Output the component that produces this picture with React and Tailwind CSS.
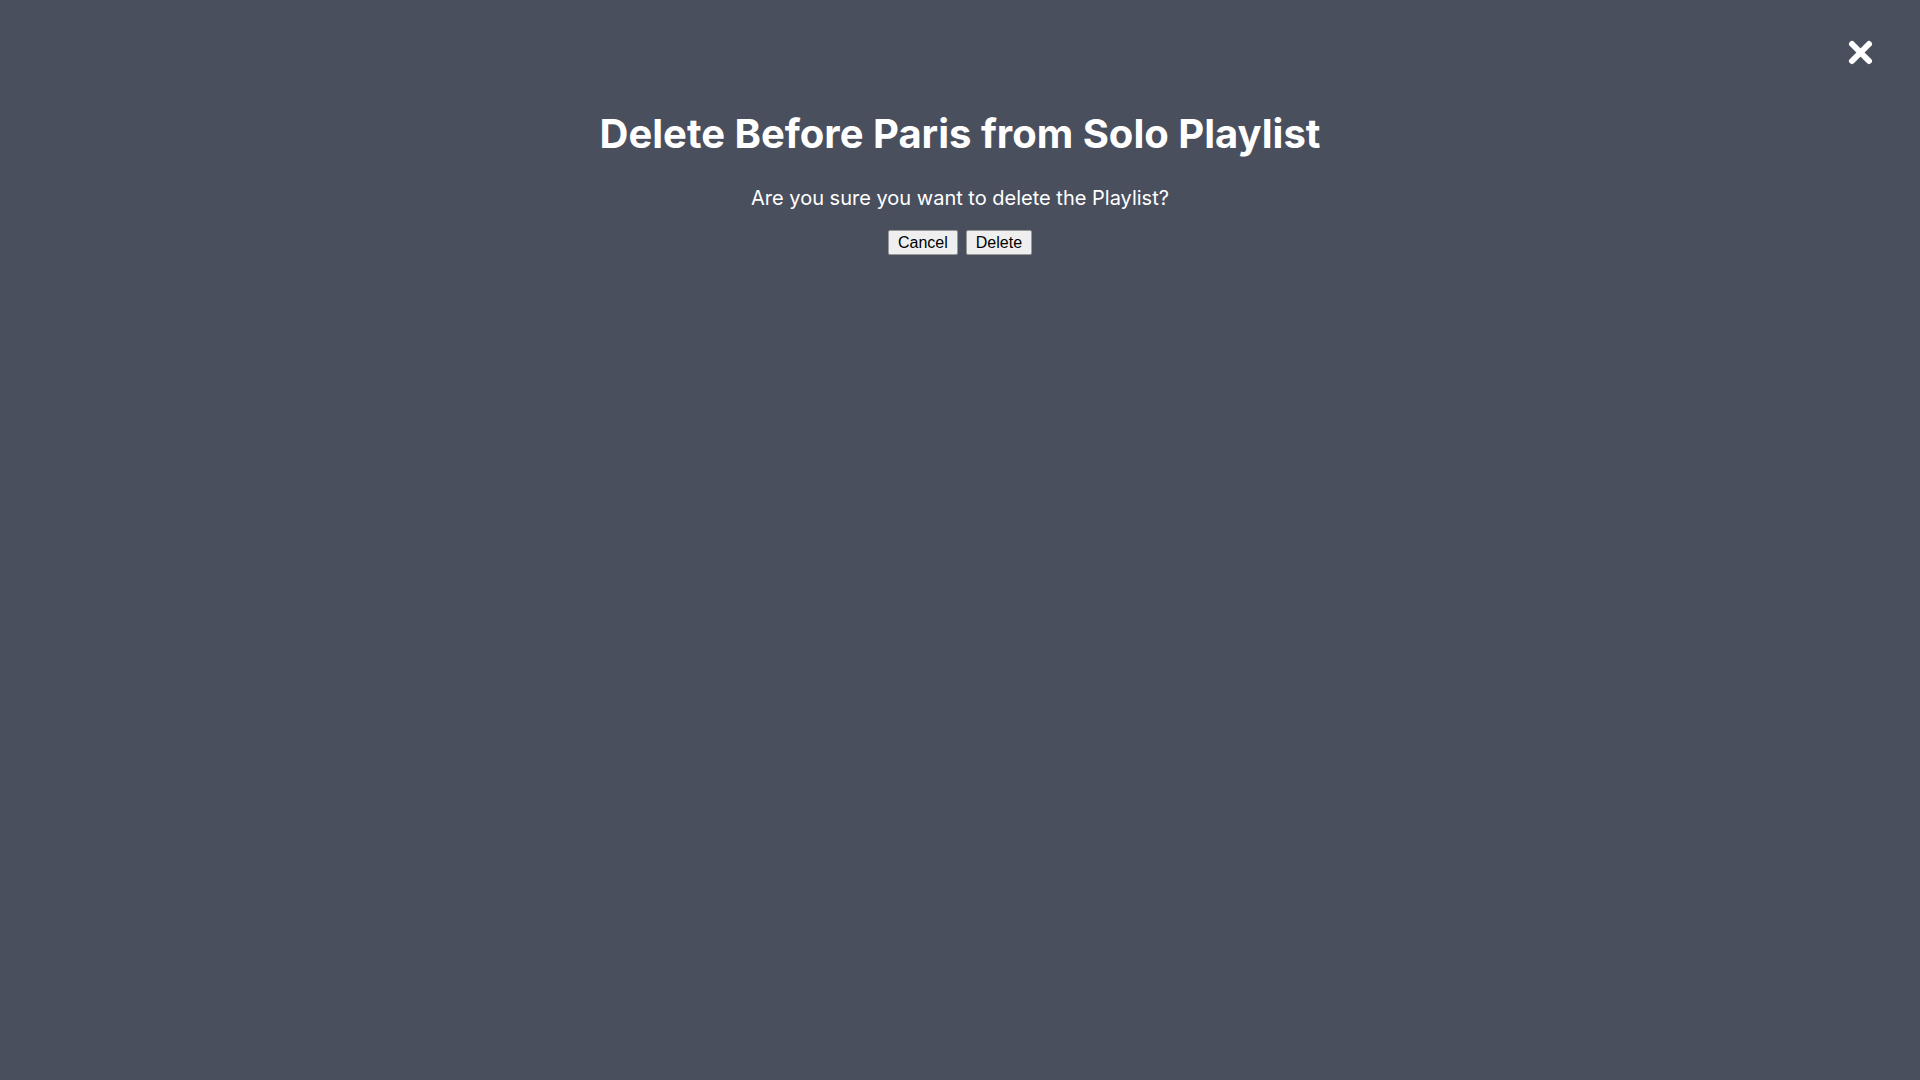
import React from 'react';

export default function App() {
  return (
    <div className="relative min-h-screen w-full bg-[#4a4f5e] text-white" style={{ fontFamily: 'Inter, "Noto Sans", sans-serif' }}>
      <button className="absolute right-[46px] top-[39px] flex h-[27px] w-[27px] items-center justify-center" aria-label="Close">
        <svg width="27" height="27" viewBox="0 0 27 27">
          <path d="M5 5 L22 22 M22 5 L5 22" stroke="white" strokeWidth="6" strokeLinecap="round" fill="none" />
        </svg>
      </button>

      <div className="flex flex-col items-center pt-[110px]">
        <h1 className="text-[40px] font-bold leading-[48px]">Delete Before Paris from Solo Playlist</h1>
        <p className="mt-[26px] text-[20px] leading-[28px]">Are you sure you want to delete the Playlist?</p>
        <div className="mt-[18px] flex gap-[8px]" style={{ fontFamily: '"Liberation Sans", Arial, sans-serif' }}>
          <button className="h-[25px] rounded-[2px] border border-[#9a9a9a] bg-[#efefef] px-[9px] text-[16px] leading-none text-black">
            Cancel
          </button>
          <button className="h-[25px] rounded-[2px] border border-[#9a9a9a] bg-[#efefef] px-[9px] text-[16px] leading-none text-black">
            Delete
          </button>
        </div>
      </div>
    </div>
  );
}
